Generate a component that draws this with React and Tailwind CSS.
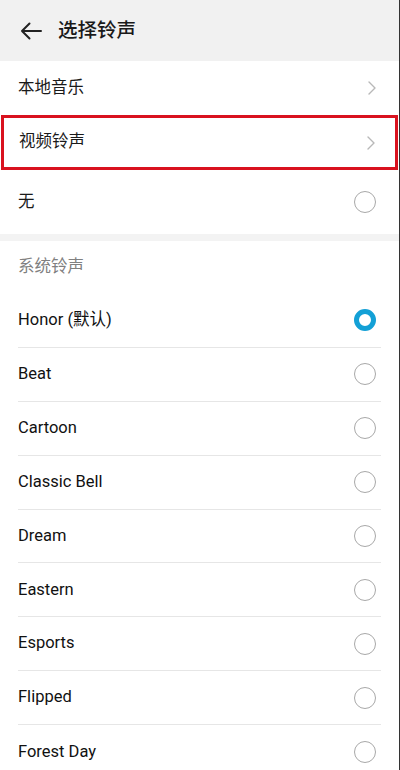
import React from "react";

const font = { fontFamily: "Roboto, 'Noto Sans CJK SC', sans-serif" };

function Radio({ checked }) {
  if (checked) {
    return <div className="w-[22px] h-[22px] rounded-full border-[5px] border-[#13a0d6] bg-white" />;
  }
  return <div className="w-[22px] h-[22px] rounded-full border-[1.5px] border-[#a8a8a8] bg-white" />;
}

function Chevron() {
  return (
    <svg width="10" height="16" viewBox="0 0 10 16" fill="none">
      <path d="M2 2 L8 8 L2 14" stroke="#b8b8b8" strokeWidth="1.4" strokeLinecap="round" strokeLinejoin="round" />
    </svg>
  );
}

const sounds = [
  "Honor (默认)",
  "Beat",
  "Cartoon",
  "Classic Bell",
  "Dream",
  "Eastern",
  "Esports",
  "Flipped",
  "Forest Day",
];

export default function App() {
  return (
    <div className="w-[400px] h-[770px] overflow-hidden bg-white border-r border-[#333]" style={font}>
      <div className="h-[61px] bg-[#f1f1f1] flex items-center pl-[20px]">
        <svg width="22" height="18" viewBox="0 0 22 18" fill="none">
          <path d="M21 9 H2 M9.5 1.5 L2 9 L9.5 16.5" stroke="#222" strokeWidth="2" strokeLinecap="round" strokeLinejoin="round" />
        </svg>
        <span className="ml-[16px] text-[19.5px] text-[#1a1a1a] font-medium">选择铃声</span>
      </div>
      <div className="h-[54px] flex items-center justify-between pl-[18px] pr-[22px]">
        <span className="text-[16.5px] text-[#1a1a1a]">本地音乐</span>
        <Chevron />
      </div>
      <div className="h-[55px] mx-[1px] border-[3px] border-[#d9121f] flex items-center justify-between pl-[15px] pr-[19px]">
        <span className="text-[16.5px] text-[#1a1a1a]">视频铃声</span>
        <Chevron />
      </div>
      <div className="h-[64px] flex items-center justify-between pl-[18px] pr-[23px]">
        <span className="text-[16.5px] text-[#1a1a1a]">无</span>
        <Radio />
      </div>
      <div className="h-[7px] bg-[#f3f3f3]" />
      <div className="h-[53px] flex items-center pl-[18px]">
        <span className="text-[16.5px] text-[#808080]">系统铃声</span>
      </div>
      <div className="pl-[18px] pr-[18px]">
        {sounds.map((s, i) => (
          <div
            key={s}
            className={
              "h-[53.9px] flex items-center justify-between pr-[5px] " +
              (i < sounds.length - 1 ? "border-b border-[#e6e6e6]" : "")
            }
          >
            <span className="text-[16.5px] text-[#111]">{s}</span>
            <Radio checked={i === 0} />
          </div>
        ))}
      </div>
    </div>
  );
}
